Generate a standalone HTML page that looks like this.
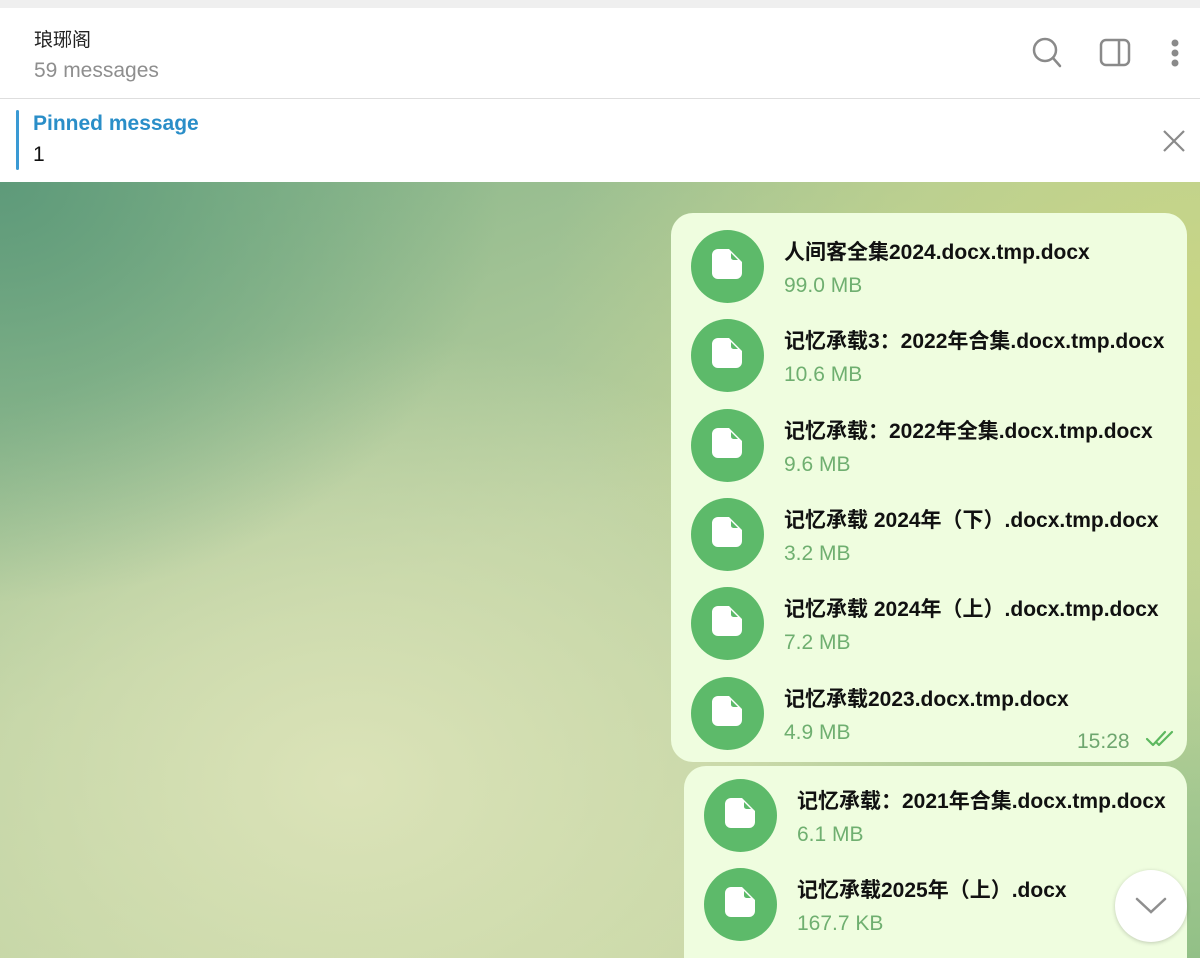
<!DOCTYPE html>
<html><head><meta charset="utf-8"><style>
*{margin:0;padding:0;box-sizing:border-box}
html,body{width:1200px;height:958px;overflow:hidden}
body{position:relative;font-family:"Liberation Sans","Noto Sans CJK SC",sans-serif;background:#fff}
.top{position:absolute;left:0;top:0;width:1200px;height:8px;background:#efefef}
.hdr{position:absolute;left:0;top:8px;width:1200px;height:91px;background:#fff;border-bottom:1px solid #dedede}
.title{position:absolute;left:34px;top:17px;font-size:19px;color:#222}
.sub{position:absolute;left:34px;top:51px;font-size:21px;color:#8e8e8e}
.pin{position:absolute;left:0;top:100px;width:1200px;height:82px;background:#fff}
.pinbar{position:absolute;left:16px;top:10px;width:3px;height:60px;background:#3a9ad4;border-radius:2px}
.pt{position:absolute;left:33px;top:12px;font-size:21px;color:#2a8ec8;font-weight:bold}
.pv{position:absolute;left:33px;top:43px;font-size:21px;color:#111}
.bg{position:absolute;left:0;top:182px;width:1200px;height:776px;overflow:hidden;
background:
radial-gradient(ellipse 500px 420px at 0px 0px,#5e9a7a 0%,rgba(100,160,125,0.6) 45%,rgba(120,170,130,0) 100%),
radial-gradient(ellipse 650px 500px at 1200px 120px,#c7d585 0%,rgba(200,214,140,0.6) 50%,rgba(200,214,140,0) 100%),
radial-gradient(ellipse 500px 500px at 1200px 800px,#8fbf85 0%,rgba(143,191,133,0) 100%),
radial-gradient(ellipse 600px 450px at 350px 600px,#dbe3b8 0%,rgba(219,227,184,0) 100%),
linear-gradient(160deg,#86b488 0%,#b9cf9f 45%,#cbd9a6 100%)}
.bub{position:absolute;background:#effddf;border-radius:22px}
.row{position:absolute;height:74px}
.ic{position:absolute;left:0;top:0;width:73px;height:73px;border-radius:50%;background:#5dba6a}
.ic svg{position:absolute;left:21px;top:19px}
.nm{position:absolute;top:6px;font-size:21px;font-weight:bold;color:#111;white-space:nowrap}
.sz{position:absolute;top:44px;font-size:21px;color:#6faf70;white-space:nowrap}
.time{position:absolute;left:1077px;top:730px;font-size:21px;color:#6ea66f}
.down{position:absolute;left:1115px;top:870px;width:72px;height:72px;border-radius:50%;background:#fff;box-shadow:0 1px 4px rgba(0,0,0,.2)}
</style></head><body>
<div class="top"></div>
<div class="hdr">
<div class="title">琅琊阁</div>
<div class="sub">59 messages</div>
<svg style="position:absolute;left:1020px;top:20px" width="180" height="60" viewBox="1020 28 180 60">
<circle cx="1045" cy="50" r="11" fill="none" stroke="#8a8a8a" stroke-width="2.5"/>
<line x1="1053" y1="58" x2="1060" y2="66" stroke="#8a8a8a" stroke-width="2.5" stroke-linecap="round"/>
<rect x="1101" y="40" width="28" height="25" rx="5" fill="none" stroke="#8a8a8a" stroke-width="2.5"/>
<line x1="1119" y1="40" x2="1119" y2="65" stroke="#8a8a8a" stroke-width="2.5"/>
<circle cx="1175" cy="43" r="3.5" fill="#8a8a8a"/><circle cx="1175" cy="53" r="3.5" fill="#8a8a8a"/><circle cx="1175" cy="63" r="3.5" fill="#8a8a8a"/>
</svg>
</div>
<div class="pin"><div class="pinbar"></div><div class="pt">Pinned message</div><div class="pv">1</div>
<svg style="position:absolute;left:1163px;top:30px" width="22" height="22"><path d="M1 1L21 21M21 1L1 21" stroke="#8a8a8a" stroke-width="2.2"/></svg></div>
<div class="bg"><div class="bub" style="left:684px;top:584px;width:503px;height:220px"></div></div>

<div class="bub" style="left:671px;top:213px;width:516px;height:549px"></div>

<div class="row" style="left:691px;top:230px"><div class="ic"><svg width="32" height="32"><path d="M6 0H17L30 13V24A6 6 0 0 1 24 30H6A6 6 0 0 1 0 24V6A6 6 0 0 1 6 0Z" fill="#fff"/><path d="M19 4L26 11H21.5A2.5 2.5 0 0 1 19 8.5Z" fill="#5dba6a"/></svg></div><div class="nm" style="left:93px">人间客全集2024.docx.tmp.docx</div><div class="sz" style="left:93px">99.0 MB</div></div>
<div class="row" style="left:691px;top:319px"><div class="ic"><svg width="32" height="32"><path d="M6 0H17L30 13V24A6 6 0 0 1 24 30H6A6 6 0 0 1 0 24V6A6 6 0 0 1 6 0Z" fill="#fff"/><path d="M19 4L26 11H21.5A2.5 2.5 0 0 1 19 8.5Z" fill="#5dba6a"/></svg></div><div class="nm" style="left:93px">记忆承载3：2022年合集.docx.tmp.docx</div><div class="sz" style="left:93px">10.6 MB</div></div>
<div class="row" style="left:691px;top:409px"><div class="ic"><svg width="32" height="32"><path d="M6 0H17L30 13V24A6 6 0 0 1 24 30H6A6 6 0 0 1 0 24V6A6 6 0 0 1 6 0Z" fill="#fff"/><path d="M19 4L26 11H21.5A2.5 2.5 0 0 1 19 8.5Z" fill="#5dba6a"/></svg></div><div class="nm" style="left:93px">记忆承载：2022年全集.docx.tmp.docx</div><div class="sz" style="left:93px">9.6 MB</div></div>
<div class="row" style="left:691px;top:498px"><div class="ic"><svg width="32" height="32"><path d="M6 0H17L30 13V24A6 6 0 0 1 24 30H6A6 6 0 0 1 0 24V6A6 6 0 0 1 6 0Z" fill="#fff"/><path d="M19 4L26 11H21.5A2.5 2.5 0 0 1 19 8.5Z" fill="#5dba6a"/></svg></div><div class="nm" style="left:93px">记忆承载 2024年（下）.docx.tmp.docx</div><div class="sz" style="left:93px">3.2 MB</div></div>
<div class="row" style="left:691px;top:587px"><div class="ic"><svg width="32" height="32"><path d="M6 0H17L30 13V24A6 6 0 0 1 24 30H6A6 6 0 0 1 0 24V6A6 6 0 0 1 6 0Z" fill="#fff"/><path d="M19 4L26 11H21.5A2.5 2.5 0 0 1 19 8.5Z" fill="#5dba6a"/></svg></div><div class="nm" style="left:93px">记忆承载 2024年（上）.docx.tmp.docx</div><div class="sz" style="left:93px">7.2 MB</div></div>
<div class="row" style="left:691px;top:677px"><div class="ic"><svg width="32" height="32"><path d="M6 0H17L30 13V24A6 6 0 0 1 24 30H6A6 6 0 0 1 0 24V6A6 6 0 0 1 6 0Z" fill="#fff"/><path d="M19 4L26 11H21.5A2.5 2.5 0 0 1 19 8.5Z" fill="#5dba6a"/></svg></div><div class="nm" style="left:93px">记忆承载2023.docx.tmp.docx</div><div class="sz" style="left:93px">4.9 MB</div></div>
<div class="time">15:28</div>
<svg style="position:absolute;left:1145px;top:729px" width="34" height="20"><path d="M2 10L8 16L20 3M12 14L14 16L27 3" fill="none" stroke="#5db85f" stroke-width="2.2" stroke-linecap="round" stroke-linejoin="round"/></svg>

<div class="row" style="left:704px;top:779px"><div class="ic"><svg width="32" height="32"><path d="M6 0H17L30 13V24A6 6 0 0 1 24 30H6A6 6 0 0 1 0 24V6A6 6 0 0 1 6 0Z" fill="#fff"/><path d="M19 4L26 11H21.5A2.5 2.5 0 0 1 19 8.5Z" fill="#5dba6a"/></svg></div><div class="nm" style="left:93px">记忆承载：2021年合集.docx.tmp.docx</div><div class="sz" style="left:93px">6.1 MB</div></div>
<div class="row" style="left:704px;top:868px"><div class="ic"><svg width="32" height="32"><path d="M6 0H17L30 13V24A6 6 0 0 1 24 30H6A6 6 0 0 1 0 24V6A6 6 0 0 1 6 0Z" fill="#fff"/><path d="M19 4L26 11H21.5A2.5 2.5 0 0 1 19 8.5Z" fill="#5dba6a"/></svg></div><div class="nm" style="left:93px">记忆承载2025年（上）.docx</div><div class="sz" style="left:93px">167.7 KB</div></div>

<div class="down"><svg style="position:absolute;left:20px;top:26px" width="32" height="20"><path d="M2 3L16 16L30 3" fill="none" stroke="#8f8f8f" stroke-width="2.5" stroke-linecap="round"/></svg></div>
</body></html>
